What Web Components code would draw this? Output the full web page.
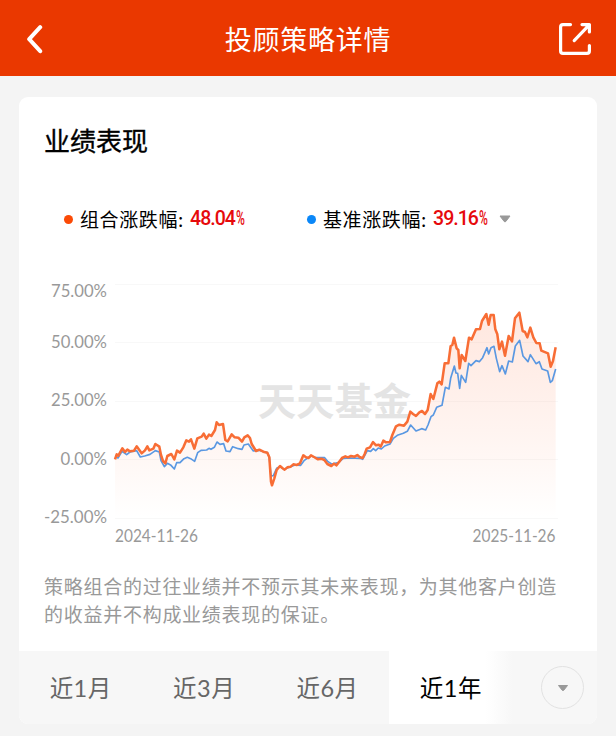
<!DOCTYPE html>
<html lang="zh-CN">
<head>
<meta charset="utf-8">
<title>投顾策略详情</title>
<style>
  body {
    margin: 0;
    height: 736px;
    overflow: hidden;
    background: #f4f4f4;
    font-family: "Noto Sans CJK SC", sans-serif;
    color: #000;
  }
</style>
</head>
<body>
<nav-bar>投顾策略详情</nav-bar>
<performance-card>
  <span slot="title">业绩表现</span>
  <legend-item slot="legend" color="#fb4a06" value="48.04">组合涨跌幅:</legend-item>
  <legend-item slot="legend" color="#0a87f8" value="39.16" menu>基准涨跌幅:</legend-item>
  <trend-chart slot="chart"></trend-chart>
  <span slot="note">策略组合的过往业绩并不预示其未来表现，为其他客户创造的收益并不构成业绩表现的保证。</span>
  <period-tabs slot="tabs">
    <period-tab>近1月</period-tab>
    <period-tab>近3月</period-tab>
    <period-tab>近6月</period-tab>
    <period-tab active>近1年</period-tab>
  </period-tabs>
</performance-card>

<script>
class NavBar extends HTMLElement {
  constructor() {
    super();
    this.attachShadow({ mode: "open" }).innerHTML = `
      <style>
        :host {
          display: flex;
          align-items: center;
          justify-content: space-between;
          box-sizing: border-box;
          height: 76px;
          padding: 2px 24px 0 26px;
          background: #ea3800;
          color: #fff;
        }
        svg { display: block; fill: none; stroke: #fff; }
        .back { width: 32px; }
        h1 {
          margin: 0;
          font-size: 27px;
          font-weight: 400;
          line-height: 40px;
          letter-spacing: .75px;
        }
      </style>
      <svg class="back" width="18" height="30" viewBox="0 0 18 30" preserveAspectRatio="xMinYMid"
        stroke-width="4" stroke-linecap="round" stroke-linejoin="round">
        <path d="M14.2 3.2 3.2 15.2 14.2 27.2"/>
      </svg>
      <h1><slot></slot></h1>
      <svg width="34" height="34" viewBox="0 0 34 34" stroke-width="3.2" stroke-linecap="round" stroke-linejoin="round">
        <path d="M12.5 2.6H5Q2.6 2.6 2.6 5V29Q2.6 31.4 5 31.4H29Q31.4 31.4 31.4 29V23.5"/>
        <path d="M16.2 18.6 31 3.2M24 2.6H31.4V10"/>
      </svg>`;
  }
}

class PerformanceCard extends HTMLElement {
  constructor() {
    super();
    this.attachShadow({ mode: "open" }).innerHTML = `
      <style>
        :host {
          display: flex;
          flex-direction: column;
          height: 627px;
          margin: 21px 19px 0;
          background: #fff;
          border-radius: 9px;
          overflow: hidden;
        }
        h2 {
          margin: 23px 0 0 25px;
          font-size: 26px;
          font-weight: 400;
          line-height: 40px;
          -webkit-text-stroke: .35px #000;
        }
        .legend {
          display: flex;
          gap: 61px;
          margin: 44px 0 0 45px;
          height: 30px;
        }
        p {
          margin: 22px 0 0 25px;
          width: 516px;
          color: #999;
          font-size: 19px;
          line-height: 27.5px;
          letter-spacing: .73px;
        }
        .tabs { margin-top: auto; }
      </style>
      <h2><slot name="title"></slot></h2>
      <div class="legend"><slot name="legend"></slot></div>
      <slot name="chart"></slot>
      <p><slot name="note"></slot></p>
      <div class="tabs"><slot name="tabs"></slot></div>`;
  }
}

class LegendItem extends HTMLElement {
  connectedCallback() {
    this.attachShadow({ mode: "open" }).innerHTML = `
      <style>
        :host {
          display: flex;
          align-items: center;
          font-size: 19px;
          line-height: 30px;
          white-space: nowrap;
        }
        i {
          width: 9px;
          height: 9px;
          margin-right: 7px;
          border-radius: 50%;
          background: ${this.getAttribute("color")};
        }
        .name { width: 110px; letter-spacing: .6px; }
        .value {
          width: 56px;
          color: #e60a0c;
          font: 500 19.5px/30px Roboto, sans-serif;
          letter-spacing: -.95px;
        }
        .pct {
          display: inline-block;
          transform: scaleX(.62);
          transform-origin: 0 50%;
          margin-left: 1px;
        }
        svg { margin-left: 10px; fill: #999; }
      </style>
      <i></i>
      <span class="name"><slot></slot></span>
      <span class="value">${this.getAttribute("value")}<span class="pct">%</span></span>
      ${this.hasAttribute("menu") ? `<svg width="12" height="8" viewBox="0 0 12 8"><path d="M1 1H11L6.8 6.5Q6 7.3 5.2 6.5Z" stroke="#999" stroke-linejoin="round"/></svg>` : ""}`;
  }
}

// series points are in thirds of a pixel, from the top left of the plot
const PORTFOLIO = `15,538 20,523 25,527 37,505 45,516 52,509 60,514 72,512 80,499 88,510 95,520 105,511
  112,499 118,511 130,506 136,492 148,500 153,525 159,543 166,550 172,528 184,522 193,538 201,512
  210,518 220,502 229,481 237,485 243,478 253,506 262,475 275,470 281,461 289,476 297,464 304,468
  315,450 320,427 327,435 339,432 346,480 353,484 365,463 374,472 385,473 396,485 403,472 413,466
  420,474 425,492 438,513 448,509 460,515 472,518 478,532 483,605 486,616 493,595 500,570 510,558
  517,564 524,569 532,562 542,560 550,553 560,555 570,550 580,526 588,532 596,534 603,526 612,531
  624,538 634,536 643,540 652,552 664,558 672,551 679,556 688,545 696,534 706,529 714,532 723,528
  734,530 742,525 750,532 758,534 764,522 770,506 780,502 789,486 798,496 806,494 812,500 820,482
  828,487 840,486 847,465 858,439 868,434 882,437 892,425 901,395 909,402 918,408 928,397 936,393
  945,402 953,390 962,342 970,357 982,310 988,305 995,313 1004,250 1015,250 1022,198 1027,195
  1032,173 1040,205 1045,210 1049,265 1055,225 1066,243 1077,173 1085,178 1098,148 1110,147
  1116,123 1129,102 1136,134 1142,105 1151,105 1156,148 1162,163 1168,208 1176,185 1185,227
  1196,168 1206,184 1215,115 1228,98 1238,153 1245,156 1252,172 1261,143 1270,172 1279,189
  1289,190 1294,212 1314,220 1322,260 1329,243 1337,202`;

const BENCHMARK = `15,530 24,534 36,514 50,524 60,516 80,512 91,531 104,528 120,523 136,512 148,516
  153,542 163,560 172,550 183,556 193,567 200,548 210,548 222,536 232,532 242,536 254,544 263,518
  273,511 290,510 297,505 303,508 313,502 321,486 330,493 341,491 348,513 360,515 368,500 385,506
  396,508 402,495 415,492 424,505 430,513 448,511 460,515 472,518 478,532 483,588 490,587 500,565
  510,560 522,568 540,561 555,555 572,556 582,542 596,532 604,528 618,533 644,533 654,545 665,552
  685,548 700,535 720,534 750,535 758,538 772,512 782,514 790,506 797,512 805,504 814,507 824,498
  840,492 850,475 862,466 880,460 892,454 902,435 918,453 935,446 947,450 954,435 963,410 970,405
  980,382 996,376 1006,322 1017,327 1022,295 1033,258 1038,279 1043,280 1049,325 1054,286 1067,307
  1076,250 1083,257 1098,242 1108,245 1118,233 1131,203 1136,222 1143,203 1152,199 1159,235
  1169,275 1176,257 1186,282 1196,243 1207,246 1216,198 1229,181 1239,228 1254,245 1261,224
  1278,251 1288,245 1296,267 1313,273 1321,307 1327,302 1337,267`;

class TrendChart extends HTMLElement {
  constructor() {
    super();
    const rows = [
      ["75.00%", 51, 56, 297, 284.5],
      ["50.00%", 51, 56, 348, 342.5],
      ["25.00%", 51, 56, 406, 401.5],
      ["0.00%", 60.5, 46.5, 465, 459.5],
      ["-25.00%", 44, 63, 523, 518.5],
    ];
    this.attachShadow({ mode: "open" }).innerHTML = `
      <style>
        :host { display: block; margin-top: 36px; }
        svg { display: block; }
        .axis { fill: #999; font: 17px Lato, sans-serif; }
        .mark { fill: #e4e4e4; font: 700 38px "Noto Sans CJK SC", sans-serif; }
        polyline { fill: none; stroke-linejoin: round; }
      </style>
      <svg width="578" height="280" viewBox="19 270 578 280">
        <defs>
          <linearGradient id="area" gradientUnits="userSpaceOnUse" x1="0" y1="98" x2="0" y2="715">
            <stop offset="0" stop-color="#ff6a35" stop-opacity=".16"/>
            <stop offset=".6" stop-color="#ff6a35" stop-opacity=".07"/>
            <stop offset="1" stop-color="#ff6a35" stop-opacity="0"/>
          </linearGradient>
        </defs>
        ${rows.map(([text, x, w, y, line]) => `
          <path d="M115 ${line}H558" stroke="#f8f8f8"/>
          <text class="axis" x="${x}" y="${y}" textLength="${w}" lengthAdjust="spacingAndGlyphs">${text}</text>`).join("")}
        <text class="mark" x="258" y="415" textLength="153">天天基金</text>
        <g transform="translate(110 280) scale(.33333)">
          <polygon fill="url(#area)" points="15,715 ${PORTFOLIO} 1337,715"/>
          <polyline stroke="#5a98e2" stroke-width="5" points="${BENCHMARK}"/>
          <polyline stroke="#f86d35" stroke-width="7.6" points="${PORTFOLIO}"/>
        </g>
        <text class="axis" x="115" y="542" textLength="83" lengthAdjust="spacingAndGlyphs">2024-11-26</text>
        <text class="axis" x="472.5" y="542" textLength="83" lengthAdjust="spacingAndGlyphs">2025-11-26</text>
      </svg>`;
  }
}

class PeriodTabs extends HTMLElement {
  constructor() {
    super();
    this.attachShadow({ mode: "open" }).innerHTML = `
      <style>
        :host {
          display: grid;
          grid-template-columns: repeat(4, 123.4px) 1fr;
          height: 73px;
          background: #f7f7f7;
        }
        .more {
          display: flex;
          align-items: center;
          justify-content: center;
          padding-left: 16px;
        }
        button {
          display: flex;
          align-items: center;
          justify-content: center;
          width: 43px;
          height: 43px;
          padding: 0;
          border: 1px solid #e2e2e2;
          border-radius: 50%;
          background: none;
        }
      </style>
      <slot></slot>
      <div class="more">
        <button><svg width="12" height="8" viewBox="0 0 12 8"><path d="M1.5 1.5H10.5L6.8 6.2Q6 7 5.2 6.2Z" fill="#999" stroke="#999" stroke-linejoin="round"/></svg></button>
      </div>`;
  }
}

class PeriodTab extends HTMLElement {
  constructor() {
    super();
    this.attachShadow({ mode: "open" }).innerHTML = `
      <style>
        :host {
          display: flex;
          align-items: center;
          justify-content: center;
          padding-bottom: 2px;
          color: #666;
          font: 23.5px Lato, "Noto Sans CJK SC", sans-serif;
          letter-spacing: .5px;
        }
        :host([active]) {
          color: #000;
          background: linear-gradient(90deg, #fff 78%, #f7f7f7);
        }
      </style>
      <slot></slot>`;
  }
}

customElements.define("nav-bar", NavBar);
customElements.define("performance-card", PerformanceCard);
customElements.define("legend-item", LegendItem);
customElements.define("trend-chart", TrendChart);
customElements.define("period-tabs", PeriodTabs);
customElements.define("period-tab", PeriodTab);
</script>
</body>
</html>
